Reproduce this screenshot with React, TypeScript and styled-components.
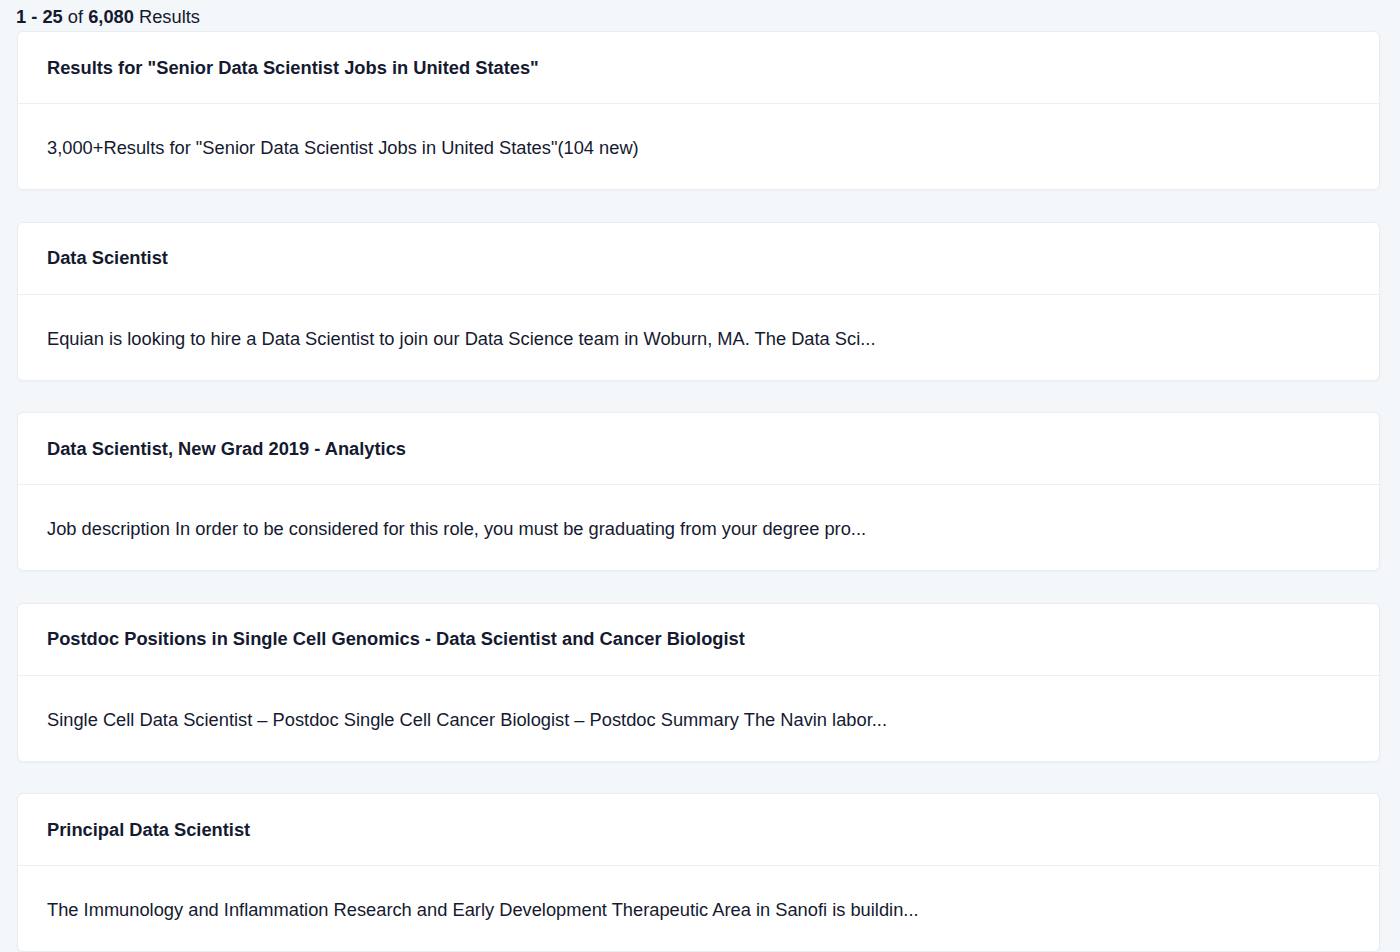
import styled, { createGlobalStyle } from 'styled-components';

const GlobalStyle = createGlobalStyle`
    html, body {
        margin: 0;
        padding: 0;
        background: #f4f7fa;
        font-family: 'Liberation Sans', Arial, sans-serif;
        color: #151a30;
    }
`;

const Page = styled.div`
    padding: 5px 20px 0 16px;
`;

const Summary = styled.div`
    font-size: 18.3px;
    line-height: 24px;
    margin-bottom: 2px;

    strong {
        font-weight: 700;
    }
`;

const List = styled.div`
    display: flex;
    flex-direction: column;
    gap: 31.5px;
    padding-left: 1px;
`;

const Card = styled.section`
    background: #ffffff;
    border: 1px solid #e9edf2;
    border-radius: 6px;
    box-shadow: 0 1px 3px rgba(30, 50, 80, 0.04);
`;

const CardHeader = styled.h3`
    margin: 0;
    height: 71px;
    display: flex;
    align-items: center;
    padding: 0 29px;
    font-size: 18.3px;
    font-weight: 700;
    border-bottom: 1px solid #eceff3;
`;

const CardBody = styled.p`
    box-sizing: border-box;
    margin: 0;
    height: 85px;
    display: flex;
    align-items: center;
    padding: 3px 29px 0;
    font-size: 18.3px;
`;

const results = [
    {
        title: 'Results for "Senior Data Scientist Jobs in United States"',
        body: '3,000+Results for "Senior Data Scientist Jobs in United States"(104 new)',
    },
    {
        title: 'Data Scientist',
        body: 'Equian is looking to hire a Data Scientist to join our Data Science team in Woburn, MA. The Data Sci...',
    },
    {
        title: 'Data Scientist, New Grad 2019 - Analytics',
        body: 'Job description In order to be considered for this role, you must be graduating from your degree pro...',
    },
    {
        title: 'Postdoc Positions in Single Cell Genomics - Data Scientist and Cancer Biologist',
        body: 'Single Cell Data Scientist \u2013 Postdoc Single Cell Cancer Biologist \u2013 Postdoc Summary The Navin labor...',
    },
    {
        title: 'Principal Data Scientist',
        body: 'The Immunology and Inflammation Research and Early Development Therapeutic Area in Sanofi is buildin...',
    },
];

export default function App() {
    return (
        <>
            <GlobalStyle />
            <Page>
                <Summary>
                    <strong>1 - 25</strong> of <strong>6,080</strong> Results
                </Summary>
                <List>
                    {results.map(result => (
                        <Card key={result.title}>
                            <CardHeader>{result.title}</CardHeader>
                            <CardBody>{result.body}</CardBody>
                        </Card>
                    ))}
                </List>
            </Page>
        </>
    );
}
